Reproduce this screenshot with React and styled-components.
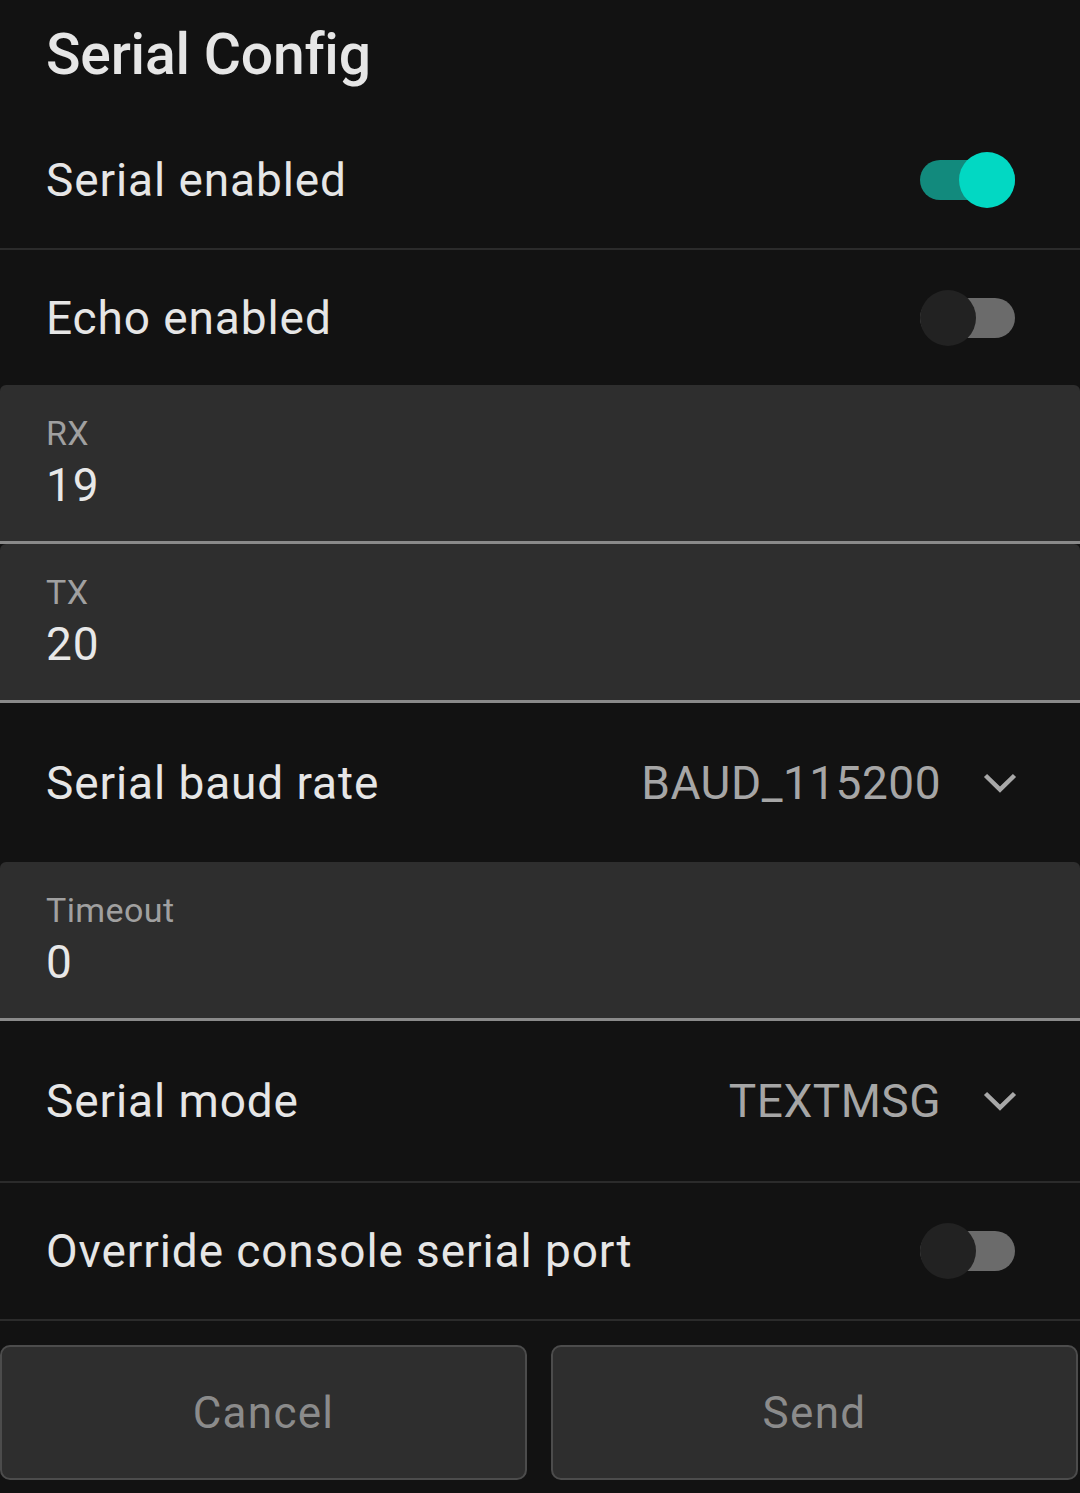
import React, { useState } from "react";
import styled, { createGlobalStyle } from "styled-components";

const GlobalStyle = createGlobalStyle`
	html, body {
		margin: 0;
		padding: 0;
		background: #121212;
	}
	body {
		font-family: Roboto, "Noto Sans", sans-serif;
		-webkit-font-smoothing: antialiased;
	}
`;

const Page = styled.div`
	width: 1080px;
	height: 1493px;
	overflow: hidden;
	background: #121212;
	display: flex;
	flex-direction: column;
`;

const Title = styled.h1`
	margin: 0;
	padding: 26px 0 29px 46px;
	font-size: 57px;
	line-height: 57px;
	font-weight: 500;
	letter-spacing: -0.2px;
	color: #e6e6e6;
`;

const Row = styled.div`
	display: flex;
	align-items: center;
	justify-content: space-between;
	flex-shrink: 0;
	height: ${(p) => p.h}px;
	padding: 0 63px 0 46px;
	border-bottom: ${(p) => (p.divider ? "2px solid #2b2b2b" : "none")};
`;

const RowLabel = styled.span`
	font-size: 46px;
	line-height: 46px;
	letter-spacing: 0.9px;
	color: #e6e6e6;
`;

const Toggle = styled.div`
	position: relative;
	width: 95px;
	height: 56px;
	margin-right: 2px;
	cursor: pointer;
`;

const Track = styled.div`
	position: absolute;
	left: 0;
	top: 8px;
	width: 95px;
	height: 40px;
	border-radius: 20px;
	background: ${(p) => (p.on ? "#128a7d" : "#6b6b6b")};
`;

const Thumb = styled.div`
	position: absolute;
	top: 0;
	left: ${(p) => (p.on ? "39px" : "0")};
	width: 56px;
	height: 56px;
	border-radius: 50%;
	background: ${(p) => (p.on ? "#02d8c3" : "#222222")};
`;

const Field = styled.div`
	flex-shrink: 0;
	height: 159px;
	box-sizing: border-box;
	background: #2e2e2e;
	border-radius: 6px 6px 0 0;
	border-bottom: 3px solid #8a8a8a;
	padding: 31px 46px 0;
	display: flex;
	flex-direction: column;
`;

const FieldLabel = styled.span`
	font-size: 34px;
	line-height: 34px;
	letter-spacing: 0.4px;
	color: #a0a0a0;
`;

const FieldValue = styled.span`
	margin-top: 12px;
	font-size: 46px;
	line-height: 46px;
	letter-spacing: 0.8px;
	color: #e8e8e8;
`;

const Picker = styled.div`
	display: flex;
	align-items: center;
`;

const PickerValue = styled.span`
	font-size: 46px;
	line-height: 46px;
	letter-spacing: 0.5px;
	color: #a6a6a6;
`;

const Chevron = styled.svg`
	margin-left: 42px;
	width: 34px;
	height: 20px;
`;

const Actions = styled.div`
	display: grid;
	grid-template-columns: 1fr 1fr;
	gap: 24px;
	padding: 24px 2px 13px 0;
`;

const Button = styled.button`
	height: 135px;
	background: #2e2e2e;
	border: 2px solid #4c4c4c;
	border-radius: 10px;
	font-family: Roboto, "Noto Sans", sans-serif;
	font-size: 44px;
	letter-spacing: 1.3px;
	color: #8b8b8b;
	cursor: pointer;
`;

const Switch = ({ on, onClick }) => (
	<Toggle onClick={onClick}>
		<Track on={on ? 1 : 0} />
		<Thumb on={on ? 1 : 0} />
	</Toggle>
);

const Select = ({ value }) => (
	<Picker>
		<PickerValue>{value}</PickerValue>
		<Chevron viewBox="0 0 34 20">
			<polyline
				points="2.5,2.5 17,16.5 31.5,2.5"
				fill="none"
				stroke="#a8a8a8"
				strokeWidth="4.5"
			/>
		</Chevron>
	</Picker>
);

const App = () => {
	const [serial, setSerial] = useState(true);
	const [echo, setEcho] = useState(false);
	const [override, setOverride] = useState(false);

	return (
		<Page>
			<GlobalStyle />
			<Title>Serial Config</Title>
			<Row h={136} divider>
				<RowLabel>Serial enabled</RowLabel>
				<Switch on={serial} onClick={() => setSerial(!serial)} />
			</Row>
			<Row h={135}>
				<RowLabel>Echo enabled</RowLabel>
				<Switch on={echo} onClick={() => setEcho(!echo)} />
			</Row>
			<Field>
				<FieldLabel>RX</FieldLabel>
				<FieldValue>19</FieldValue>
			</Field>
			<Field>
				<FieldLabel>TX</FieldLabel>
				<FieldValue>20</FieldValue>
			</Field>
			<Row h={159}>
				<RowLabel>Serial baud rate</RowLabel>
				<Select value="BAUD_115200" />
			</Row>
			<Field>
				<FieldLabel>Timeout</FieldLabel>
				<FieldValue>0</FieldValue>
			</Field>
			<Row h={160} divider>
				<RowLabel>Serial mode</RowLabel>
				<Select value="TEXTMSG" />
			</Row>
			<Row h={136} divider>
				<RowLabel>Override console serial port</RowLabel>
				<Switch on={override} onClick={() => setOverride(!override)} />
			</Row>
			<Actions>
				<Button>Cancel</Button>
				<Button>Send</Button>
			</Actions>
		</Page>
	);
};

export default App;
